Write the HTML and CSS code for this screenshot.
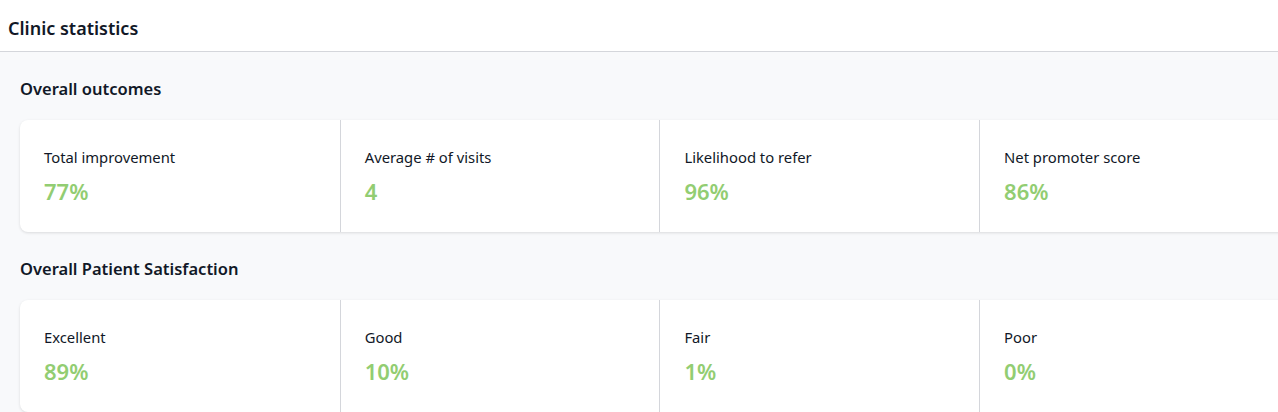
FILE: index.html
```html
<!DOCTYPE html>
<html lang="en">
<head>
  <meta charset="UTF-8" />
  <meta name="viewport" content="width=device-width, initial-scale=1" />
  <title>Clinic statistics</title>
  <link rel="stylesheet" href="styles.css">
</head>
<body>

  <!-- HEADER -->
  <header class="page-header">
    <h1>Clinic statistics</h1>
  </header>

  <main class="content">

    <!-- OUTCOMES -->
    <section class="stat-section">
      <h2>Overall outcomes</h2>
      <div class="stat-card">
        <div class="stat">
          <p class="stat-label">Total improvement</p>
          <p class="stat-value">77%</p>
        </div>
        <div class="stat">
          <p class="stat-label">Average # of visits</p>
          <p class="stat-value">4</p>
        </div>
        <div class="stat">
          <p class="stat-label">Likelihood to refer</p>
          <p class="stat-value">96%</p>
        </div>
        <div class="stat">
          <p class="stat-label">Net promoter score</p>
          <p class="stat-value">86%</p>
        </div>
      </div>
    </section>

    <!-- SATISFACTION -->
    <section class="stat-section">
      <h2>Overall Patient Satisfaction</h2>
      <div class="stat-card">
        <div class="stat">
          <p class="stat-label">Excellent</p>
          <p class="stat-value">89%</p>
        </div>
        <div class="stat">
          <p class="stat-label">Good</p>
          <p class="stat-value">10%</p>
        </div>
        <div class="stat">
          <p class="stat-label">Fair</p>
          <p class="stat-value">1%</p>
        </div>
        <div class="stat">
          <p class="stat-label">Poor</p>
          <p class="stat-value">0%</p>
        </div>
      </div>
    </section>

  </main>
</body>
</html>
```

FILE: styles.css
```css
* {
  box-sizing: border-box;
}
body, html {
  margin: 0;
  height: 100%;
  overflow: hidden;
  font-family: 'Noto Sans', 'Open Sans', sans-serif;
  color: #111827;
  background: #f8f9fb;
}

.page-header {
  background: #fff;
  border-bottom: 1px solid #d4d6db;
  height: 52px;
  padding: 5px 8px 0;
  display: flex;
  align-items: center;
}

.page-header h1 {
  margin: 0;
  font-size: 18px;
  font-weight: 600;
}

.content {
  padding: 0 20px;
}

.stat-section h2 {
  margin: 0;
  padding: 25px 0 19px;
  font-size: 16.5px;
  line-height: 24px;
  font-weight: 600;
}

.stat-card {
  display: grid;
  grid-template-columns: repeat(4, 319.7px);
  width: 1279px;
  background: #fff;
  border-radius: 8px;
  box-shadow: 0 1px 3px rgba(0,0,0,0.12);
}

.stat {
  padding: 26px 24px 27px;
  border-left: 1px solid #d4d6db;
}

.stat:first-child {
  border-left: none;
}

.stat-label {
  margin: 0 0 9px;
  font-size: 14.8px;
  line-height: 22px;
}

.stat-value {
  margin: 0;
  font-size: 22px;
  line-height: 28px;
  font-weight: 600;
  color: #92cd72;
}
```
